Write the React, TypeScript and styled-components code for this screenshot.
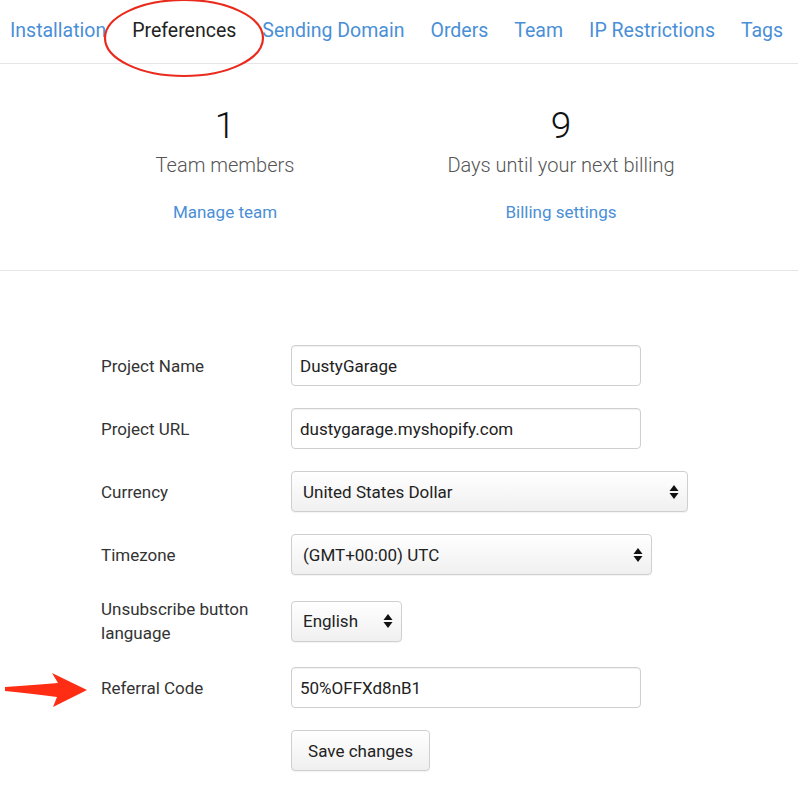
import React from "react";
import styled, { createGlobalStyle } from "styled-components";

const Global = createGlobalStyle`
  html, body { margin: 0; padding: 0; background: #fff; }
  body { font-family: Roboto, "Liberation Sans", sans-serif; color: #333; }
  * { box-sizing: border-box; }
`;

const Page = styled.div`
  position: relative;
  width: 798px;
  min-height: 803px;
  overflow: hidden;
`;

const Nav = styled.nav`
  display: flex;
  align-items: center;
  height: 64px;
  padding: 0 0 2px 10px;
  gap: 26px;
  border-bottom: 1px solid #e6e6e6;
`;

const NavItem = styled.a<{ $active?: boolean }>`
  font-size: 19.5px;
  color: ${(p) => (p.$active ? "#222" : "#4a8fd6")};
  text-decoration: none;
  white-space: nowrap;
  line-height: 1;
`;

const Stats = styled.section`
  display: grid;
  grid-template-columns: 336px 336px;
  padding: 40px 0 0 57px;
  height: 207px;
  border-bottom: 1px solid #e6e6e6;
`;

const Stat = styled.div`
  display: flex;
  flex-direction: column;
  align-items: center;
`;

const StatNumber = styled.div`
  font-size: 37px;
  font-weight: 300;
  color: #111;
  line-height: 44px;
`;

const StatLabel = styled.div`
  font-size: 20px;
  font-weight: 300;
  color: #555;
  line-height: 28px;
  margin-top: 3px;
`;

const StatLink = styled.a`
  font-size: 17px;
  color: #4a8fd6;
  line-height: 24px;
  margin-top: 21px;
  text-decoration: none;
`;

const Form = styled.form`
  display: flex;
  flex-direction: column;
  gap: 22px;
  padding: 74px 0 0 101px;
`;

const Row = styled.div`
  display: grid;
  grid-template-columns: 190px auto;
  align-items: center;
  min-height: 41px;
`;

const Label = styled.label`
  font-size: 17px;
  color: #333;
  line-height: 24px;
  max-width: 170px;
`;

const TextInput = styled.input`
  width: 350px;
  height: 41px;
  padding: 0 8px;
  font-family: Roboto, "Liberation Sans", sans-serif;
  font-size: 17px;
  color: #222;
  border: 1px solid #cfcfcf;
  border-radius: 4px;
  box-shadow: inset 0 1px 1px rgba(0, 0, 0, 0.06);
  outline: none;
`;

const SelectBox = styled.div<{ $w: number }>`
  width: ${(p) => p.$w}px;
  height: 41px;
  display: flex;
  align-items: center;
  justify-content: space-between;
  padding: 0 8px 0 11px;
  font-size: 17px;
  color: #222;
  border: 1px solid #cfcfcf;
  border-radius: 4px;
  background: linear-gradient(#fff, #f0f0f0);
  box-shadow: 0 1px 1px rgba(0, 0, 0, 0.05);
`;

const Button = styled.button`
  height: 41px;
  width: 139px;
  font-family: Roboto, "Liberation Sans", sans-serif;
  font-size: 17px;
  color: #222;
  border: 1px solid #cfcfcf;
  border-radius: 4px;
  background: linear-gradient(#fff, #efefef);
  box-shadow: 0 1px 1px rgba(0, 0, 0, 0.05);
`;

const Ellipse = styled.svg`
  position: absolute;
  left: 102px;
  top: -2px;
  pointer-events: none;
`;

const Arrow = styled.svg`
  position: absolute;
  left: 0;
  top: 668px;
  pointer-events: none;
`;

const Updown = () => (
  <svg width="10" height="16" viewBox="0 0 10 16">
    <path d="M5 1 L9.5 7 H0.5 Z" fill="#111" />
    <path d="M5 15 L9.5 9 H0.5 Z" fill="#111" />
  </svg>
);

const tabs = [
  "Installation",
  "Preferences",
  "Sending Domain",
  "Orders",
  "Team",
  "IP Restrictions",
  "Tags",
];

export default function App() {
  return (
    <Page>
      <Global />
      <Nav>
        {tabs.map((t) => (
          <NavItem key={t} $active={t === "Preferences"}>
            {t}
          </NavItem>
        ))}
      </Nav>
      <Stats>
        <Stat>
          <StatNumber>1</StatNumber>
          <StatLabel>Team members</StatLabel>
          <StatLink>Manage team</StatLink>
        </Stat>
        <Stat>
          <StatNumber>9</StatNumber>
          <StatLabel>Days until your next billing</StatLabel>
          <StatLink>Billing settings</StatLink>
        </Stat>
      </Stats>
      <Form onSubmit={(e) => e.preventDefault()}>
        <Row>
          <Label>Project Name</Label>
          <TextInput readOnly defaultValue="DustyGarage" />
        </Row>
        <Row>
          <Label>Project URL</Label>
          <TextInput readOnly defaultValue="dustygarage.myshopify.com" />
        </Row>
        <Row>
          <Label>Currency</Label>
          <SelectBox $w={397}>
            <span>United States Dollar</span>
            <Updown />
          </SelectBox>
        </Row>
        <Row>
          <Label>Timezone</Label>
          <SelectBox $w={361}>
            <span>(GMT+00:00) UTC</span>
            <Updown />
          </SelectBox>
        </Row>
        <Row>
          <Label>Unsubscribe button language</Label>
          <SelectBox $w={111}>
            <span>English</span>
            <Updown />
          </SelectBox>
        </Row>
        <Row>
          <Label>Referral Code</Label>
          <TextInput readOnly defaultValue="50%OFFXd8nB1" />
        </Row>
        <Row>
          <span />
          <Button type="button">Save changes</Button>
        </Row>
      </Form>
      <Ellipse width="164" height="82" viewBox="0 0 164 82">
        <ellipse cx="82" cy="40" rx="79" ry="38" fill="none" stroke="#ea2a1c" strokeWidth="2.2" />
      </Ellipse>
      <Arrow width="92" height="44" viewBox="0 0 92 44">
        <path
          d="M5 19 C 25 18, 42 16, 58 15 L 52 5 L 87 22 L 53 39 L 57 29 C 42 27, 25 25, 5 23 Z"
          fill="#ff2d14"
        />
      </Arrow>
    </Page>
  );
}
